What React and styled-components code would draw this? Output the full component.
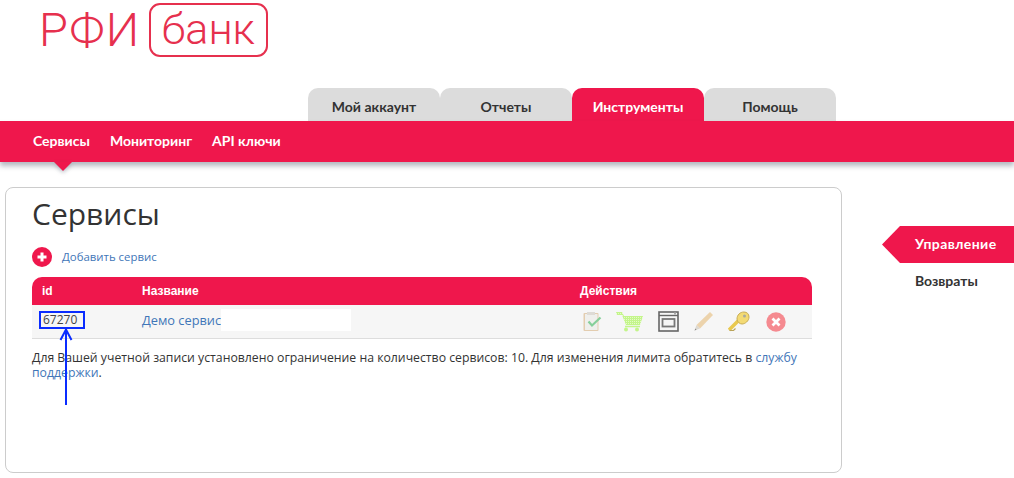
import styled, { createGlobalStyle } from "styled-components";

const red = "#ef174c";
const link = "#3f76b8";

const GlobalStyle = createGlobalStyle`
  html, body {
    margin: 0;
    padding: 0;
    background: #fff;
    overflow: hidden;
  }
  body {
    font-family: "Open Sans", "DejaVu Sans", sans-serif;
    font-size: 12px;
    color: #333;
  }
`;

const Page = styled.div`
  width: 1014px;
  height: 478px;
  overflow: hidden;
`;

const Header = styled.header`
  height: 88px;
  padding: 3px 0 0 39px;
  box-sizing: border-box;
  display: flex;
  align-items: flex-start;
  gap: 8px;
  font-family: Roboto, "Open Sans", sans-serif;
  font-weight: 300;
  color: #e6304e;
`;

const LogoWord = styled.div`
  font-size: 47px;
  line-height: 54px;
  letter-spacing: 1.5px;
`;

const LogoBox = styled.div`
  width: 119px;
  height: 54px;
  box-sizing: border-box;
  border: 2px solid #e6304e;
  border-radius: 11px;
  font-size: 43px;
  line-height: 49px;
  text-align: center;
`;

const Tabs = styled.nav`
  display: flex;
  height: 33px;
  padding-left: 308px;
`;

const Tab = styled.div`
  width: 132px;
  border-radius: 10px 10px 0 0;
  background: ${(p) => (p.$active ? red : "#dcdcdc")};
  color: ${(p) => (p.$active ? "#fff" : "#333")};
  font: 700 14px/37px Lato, "Open Sans", sans-serif;
  text-align: center;
`;

const SubNav = styled.div`
  position: relative;
  height: 41px;
  padding-left: 33px;
  display: flex;
  gap: 20px;
  background: ${red};
  box-shadow: 0 4px 5px rgba(70, 80, 100, 0.4);
`;

const SubLink = styled.div`
  color: #fff;
  font: 700 14px/40px Lato, "Open Sans", sans-serif;
`;

const Pointer = styled.div`
  position: absolute;
  left: 54px;
  top: 41px;
  width: 0;
  height: 0;
  border-left: 9px solid transparent;
  border-right: 9px solid transparent;
  border-top: 9px solid ${red};
  filter: drop-shadow(0 2px 2px rgba(70, 80, 100, 0.35));
`;

const Content = styled.div`
  display: flex;
  align-items: flex-start;
  padding: 25px 0 0 5px;
`;

const Panel = styled.main`
  position: relative;
  width: 837px;
  height: 286px;
  box-sizing: border-box;
  border: 1px solid #ccc;
  border-radius: 8px;
  padding: 5px 29px 0 26px;
`;

const Title = styled.h1`
  margin: 0;
  font-size: 30px;
  font-weight: 400;
  line-height: 42px;
  color: #333;
`;

const AddRow = styled.div`
  display: flex;
  align-items: center;
  gap: 10px;
  margin-top: 12px;
  height: 20px;
`;

const Link = styled.a`
  color: ${link};
  font-size: ${(p) => p.$size || 12}px;
  line-height: ${(p) => (p.$size ? "14px" : "inherit")};
`;

const Table = styled.div`
  margin-top: 10px;
  width: 780px;
`;

const HeadRow = styled.div`
  display: grid;
  grid-template-columns: 100px 438px 1fr;
  height: 28px;
  padding-left: 10px;
  align-items: center;
  background: ${red};
  border-radius: 10px 10px 0 0;
  color: #fff;
  font: 700 12px "Liberation Sans", Arial, sans-serif;
`;

const BodyRow = styled.div`
  display: grid;
  grid-template-columns: 100px 438px 1fr;
  height: 34px;
  box-sizing: border-box;
  padding-left: 10px;
  align-items: center;
  background: #f6f6f6;
  border-bottom: 1px solid #ddd;
`;

const IdCell = styled.div`
  position: relative;
  margin-top: -4px;
  padding-left: 1px;
  font-size: 12px;
  line-height: 14px;
  color: #444;
`;

const Highlight = styled.div`
  position: absolute;
  left: -3px;
  top: -2px;
  width: 42px;
  height: 14px;
  border: 2px solid #0a2cff;
`;

const NameCell = styled.div`
  display: flex;
  align-items: center;
  margin-top: -4px;
`;

const Blank = styled.div`
  width: 130px;
  height: 22px;
  background: #fff;
`;

const Actions = styled.div`
  display: flex;
  align-items: center;
  gap: 14px;
  padding-left: 3px;
`;

const Note = styled.p`
  margin: 11px 0 0;
  width: 790px;
  font-size: 12.25px;
  line-height: 15px;
  color: #333;
`;

const Arrow = styled.svg`
  position: absolute;
  left: 53px;
  top: 140px;
`;

const Side = styled.aside`
  margin: 39px 0 0 40px;
  width: 132px;
`;

const SideActive = styled.div`
  height: 37px;
  padding-left: 33px;
  background: ${red};
  clip-path: polygon(18px 0, 100% 0, 100% 100%, 18px 100%, 0 50%);
  color: #fff;
  font: 700 14px/36px Lato, "Open Sans", sans-serif;
  letter-spacing: 0.4px;
`;

const SideLink = styled.div`
  padding-left: 33px;
  margin-top: 9px;
  color: #333;
  font: 700 14px/18px Lato, "Open Sans", sans-serif;
`;

const PlusIcon = () => (
  <svg width="20" height="20" viewBox="0 0 20 20">
    <circle cx="10" cy="10" r="10" fill={red} />
    <path d="M8.5 5.500h3v3h3v3h-3v3h-3v-3h-3v-3h3z" fill="#fff" />
  </svg>
);

const ChecklistIcon = () => (
  <svg width="19" height="21" viewBox="0 0 19 21">
    <rect x="0.500" y="2" width="15" height="18" rx="1" fill="#e3cdb0" />
    <rect x="2" y="3" width="12.500" height="16" fill="#efefec" />
    <rect x="4" y="1" width="8" height="3" fill="#dedbd6" />
    <path d="M5.500 10.500l3.500 4L17.500 6.500" fill="none" stroke="#86cf9a" strokeWidth="2.200" />
  </svg>
);

const CartIcon = () => (
  <svg width="28" height="21" viewBox="0 0 28 21">
    <defs>
      <pattern id="cartDots" width="2" height="2" patternUnits="userSpaceOnUse">
        <rect width="2" height="2" fill="#c3f58a" />
        <rect width="1" height="1" fill="#e4fbc6" />
      </pattern>
    </defs>
    <path d="M0 1h6l2 4h19l-3 9H10L6 4H1z" fill="url(#cartDots)" />
    <path d="M9 15.500h15" stroke="#c3f58a" strokeWidth="1.500" />
    <circle cx="10" cy="18.500" r="2" fill="#c3f58a" />
    <circle cx="21" cy="18.500" r="2" fill="#c3f58a" />
  </svg>
);

const WindowIcon = () => (
  <svg width="21" height="21" viewBox="0 0 21 21">
    <rect x="1" y="1" width="19" height="19" fill="none" stroke="#666" strokeWidth="1.600" />
    <path d="M1 4.500h19" stroke="#666" strokeWidth="1.400" />
    <rect x="16" y="1.500" width="2" height="2" fill="#aaa" />
    <rect x="4.500" y="8" width="12" height="7.500" fill="none" stroke="#777" strokeWidth="1.800" />
  </svg>
);

const PencilIcon = () => (
  <svg width="21" height="21" viewBox="0 0 21 21">
    <path d="M17 1l3 3L7 17.500 3.500 14z" fill="#ecd3ac" />
    <path d="M3.500 14L7 17.500 1.500 19.500z" fill="#dcd8d0" />
    <path d="M2.500 17.500l-1 2 2-.8z" fill="#8a8a8a" />
  </svg>
);

const KeyIcon = () => (
  <svg width="24" height="21" viewBox="0 0 24 21">
    <path d="M1 19l9-9" stroke="#e9c94f" strokeWidth="3.600" />
    <path d="M1.500 19.500h4l2-2" fill="none" stroke="#b9a35a" strokeWidth="1.200" />
    <path d="M9 8c0-4 3-7 7-7 3 0 5 2 5 5 0 4-4 7-7 7-2 0-5-2-5-5z" fill="#f3da74" stroke="#c9ad55" />
    <circle cx="16.500" cy="5" r="1.500" fill="#a9a9a0" />
  </svg>
);

const CloseIcon = () => (
  <svg width="20" height="20" viewBox="0 0 20 20">
    <circle cx="10" cy="10" r="9.700" fill="#f58a90" />
    <path d="M6.500 6.500l7 7M13.500 6.500l-7 7" stroke="#fff" strokeWidth="2.800" />
  </svg>
);

const App = () => (
  <Page>
    <GlobalStyle />
    <Header>
      <LogoWord>РФИ</LogoWord>
      <LogoBox>банк</LogoBox>
    </Header>
    <Tabs>
      <Tab>Мой аккаунт</Tab>
      <Tab>Отчеты</Tab>
      <Tab $active>Инструменты</Tab>
      <Tab>Помощь</Tab>
    </Tabs>
    <SubNav>
      <SubLink>Сервисы</SubLink>
      <SubLink>Мониторинг</SubLink>
      <SubLink>API ключи</SubLink>
      <Pointer />
    </SubNav>
    <Content>
      <Panel>
        <Title>Сервисы</Title>
        <AddRow>
          <PlusIcon />
          <Link $size={11.4}>Добавить сервис</Link>
        </AddRow>
        <Table>
          <HeadRow>
            <div>id</div>
            <div>Название</div>
            <div>Действия</div>
          </HeadRow>
          <BodyRow>
            <IdCell>
              67270
              <Highlight />
            </IdCell>
            <NameCell>
              <Link $size={12.8}>Демо сервис</Link>
              <Blank />
            </NameCell>
            <Actions>
              <ChecklistIcon />
              <CartIcon />
              <WindowIcon />
              <PencilIcon />
              <KeyIcon />
              <CloseIcon />
            </Actions>
          </BodyRow>
        </Table>
        <Note>
          Для Вашей учетной записи установлено ограничение на количество сервисов: 10. Для изменения лимита обратитесь в{" "}
          <Link $size={12.25}>службу</Link> <Link $size={12.25}>поддержки</Link>.
        </Note>
        <Arrow width="14" height="77" viewBox="0 0 14 77">
          <path d="M7 3v74M1.500 12L7 1.500 12.500 12" fill="none" stroke="#0a2cff" strokeWidth="2" />
        </Arrow>
      </Panel>
      <Side>
        <SideActive>Управление</SideActive>
        <SideLink>Возвраты</SideLink>
      </Side>
    </Content>
  </Page>
);

export default App;
